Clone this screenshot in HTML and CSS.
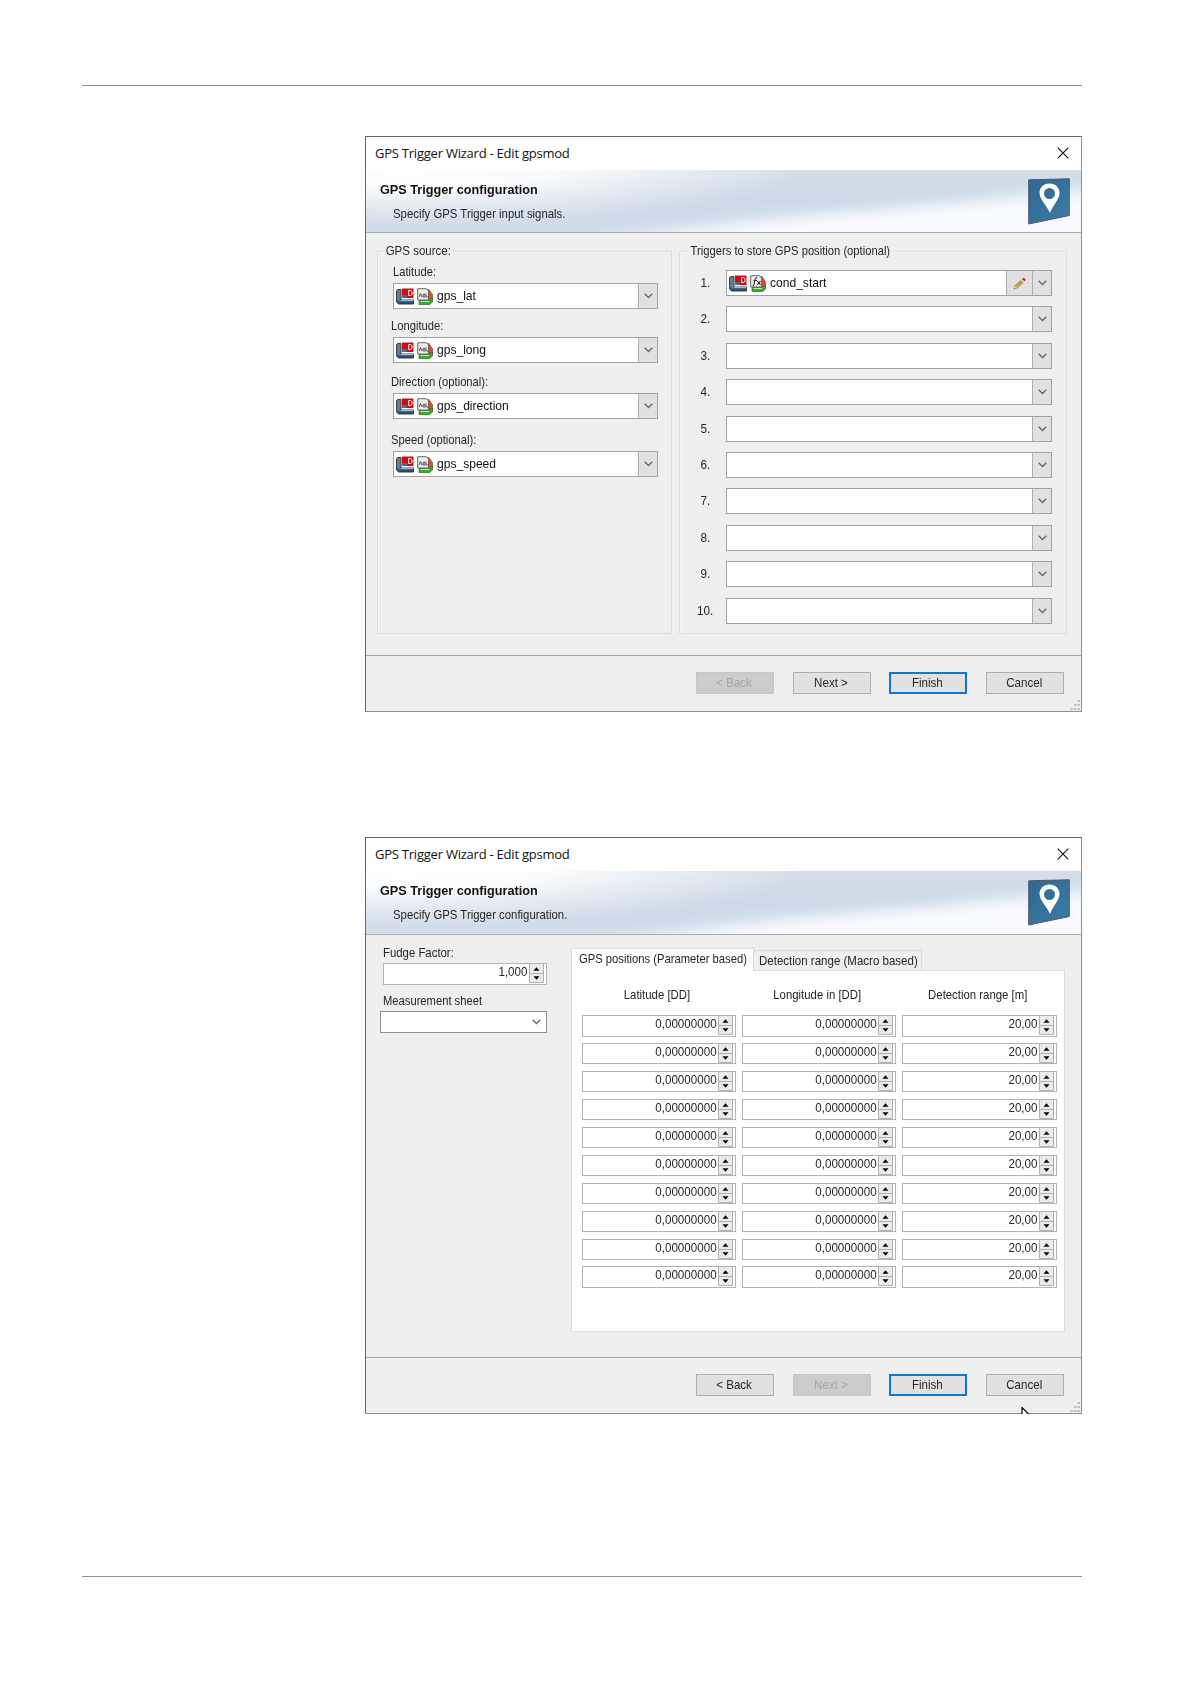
FILE: index.html
```html
<!DOCTYPE html>
<html lang="en">
<head>
<meta charset="utf-8">
<title>GPS Trigger Wizard</title>
<link rel="stylesheet" href="styles.css">
</head>
<body>
<svg class="defs" width="0" height="0">
  <defs>
    <linearGradient id="sky" x1="0" y1="0" x2="0" y2="1"><stop offset="0" stop-color="#d3dfe9"/><stop offset=".5" stop-color="#cbd9e6"/><stop offset="1" stop-color="#d0ddea"/></linearGradient>
    <radialGradient id="glow"><stop offset="0" stop-color="#fff"/><stop offset=".4" stop-color="#fff" stop-opacity=".85"/><stop offset="1" stop-color="#fff" stop-opacity="0"/></radialGradient>
    <linearGradient id="plate" x1="0" y1="0" x2="1" y2="1"><stop offset="0" stop-color="#2f6790"/><stop offset="1" stop-color="#3c7cab"/></linearGradient>
    <linearGradient id="steel" x1="0" y1="0" x2="0" y2="1"><stop offset="0" stop-color="#777"/><stop offset=".7" stop-color="#4f83b3"/><stop offset="1" stop-color="#26384a"/></linearGradient>
    <filter id="soft" x="-20%" y="-60%" width="140%" height="220%"><feGaussianBlur stdDeviation="16 7"/></filter>
  </defs>
  <symbol id="banner" viewBox="0 0 715 62" preserveAspectRatio="none">
    <rect width="715" height="62" fill="url(#sky)"/>
    <ellipse cx="40" cy="-6" rx="400" ry="62" fill="url(#glow)"/>
    <path d="M240 70 410 48 560 35 760 16V100H240z" fill="#f8faff" filter="url(#soft)"/>
  </symbol>
  <symbol id="pin" viewBox="0 0 42 47">
    <path d="M.7 1.8 41.3.8V37.5L.7 46z" fill="url(#plate)" stroke="#4c5b66" stroke-width="1"/>
    <path fill-rule="evenodd" d="M21.5 5.500c-6 0-10 4.200-10 9.500 0 6.500 6.500 11 10.500 20 3.500-9 9.500-13.500 9.500-20 0-5.300-4-9.500-10-9.500zm0 4.500a5.500 5.500 0 1 1 0 11 5.500 5.500 0 0 1 0-11z" fill="#fff"/>
  </symbol>
  <symbol id="device" viewBox="0 0 18 17">
    <path d="M1.500 1.500H5V12H17.500V16H2.500L.5 14V3z" fill="url(#steel)" stroke="#3a3f45"/>
    <path d="M5 12.500H17" stroke="#9cc0dd"/>
    <path d="M6 .5H17.500V10H6z" fill="#d20a12"/>
    <path d="M6 7H11V10H6z" fill="#4a6d8c"/>
    <path d="M12.700 2.500V7.500H14.500Q16.200 7 16.200 5T14.500 2.500z" fill="none" stroke="#fff"/>
  </symbol>
  <symbol id="sheet" viewBox="0 0 16 17">
    <path d="M9 1.500H12L15.700 7V12H11z" fill="#e0492a" stroke="#a53420" stroke-width=".6"/>
    <path d="M2 12H12L15.500 10V14L12.500 16.700H2z" fill="#3da835" stroke="#2c6e28" stroke-width=".7"/>
    <path d="M3.500 13.500H12" stroke="#bdf0a8"/>
    <path d="M.7.700H9.500L11.500 3V12H.7z" fill="#eee" stroke="#666"/>
  </symbol>
  <symbol id="signal" viewBox="0 0 16 17">
    <use href="#sheet"/>
    <path d="M2 9 3.500 5.500 4.800 9M6 6.500H8V9H6zM9 5.500V9H11" fill="none" stroke="#555"/>
  </symbol>
  <symbol id="function" viewBox="0 0 16 17">
    <use href="#sheet"/>
    <path d="M2.500 11Q4 11 4.500 7T7 2.500M3.500 5.500H7M7.500 6 10.500 10M10.500 6 7 10" fill="none" stroke="#333" stroke-width="1.100"/>
  </symbol>
  <symbol id="pencil" viewBox="0 0 14 14">
    <path d="M1 13 2 9.500 9 3 11.500 5.500 4.500 12z" fill="#b9a94a" stroke="#8a7b35" stroke-width=".6"/>
    <path d="M1 13 2 9.500 4.500 12z" fill="#e8dcb2"/><path d="M1 13 1.500 11.300 2.700 12.500z" fill="#444"/>
    <path d="M8.500 3.500 10 2 12.500 4.500 11 6z" fill="#ddd"/>
    <path d="M9.800 2.200 11 1Q13.500 1 13.500 3.300L12.300 4.600z" fill="#b3202c"/>
  </symbol>
  <symbol id="chevron" viewBox="0 0 9 6"><path d="M.7.800 4.500 4.500 8.300.800" fill="none" stroke="#666" stroke-width="1.300"/></symbol>
  <symbol id="cross" viewBox="0 0 12 12"><path d="M.7.700 11.300 11.300M11.300.700.700 11.300" stroke="#111" stroke-width="1.100"/></symbol>
  <symbol id="spinner" viewBox="0 0 16 19">
    <path d="M1 0H15V18H1z" fill="#ebebeb"/>
    <path d="M.5 0V18.500H14.500V0M0 9.500H14.500" fill="none" stroke="#b0b0b0"/>
    <path d="M4.500 6.700H10.500L7.500 3.200zM4.500 12.300H10.500L7.500 15.800z" fill="#000"/>
  </symbol>
  <symbol id="grip" viewBox="0 0 10 10"><path d="M7.500 0H10V2H7.500zM4 4H6.500V6H4zM7.500 4H10V6H7.500zM.5 8H3V10H.5zM4 8H6.500V10H4zM7.500 8H10V10H7.500z" fill="#bfbfbf"/></symbol>
</svg>

<main class="page">
  <section class="window window-signals">
    <header class="titlebar"><span class="caption">GPS Trigger Wizard - Edit gpsmod</span><svg class="close"><use href="#cross"/></svg></header>
    <div class="banner">
      <svg class="banner-art"><use href="#banner"/></svg>
      <div class="banner-text"><b class="txt">GPS Trigger configuration</b><span class="txt sub">Specify GPS Trigger input signals.</span></div>
      <svg class="pin"><use href="#pin"/></svg>
    </div>
    <div class="content groups">
      <div class="group source">
        <div class="legend"><span class="txt">GPS source:</span></div>
        <div class="field f1"><span class="txt label">Latitude:</span><div class="combo"><svg class="ic"><use href="#device"/></svg><svg class="ic2"><use href="#signal"/></svg><span class="txt value">gps_lat</span><i class="drop"><svg class="chev"><use href="#chevron"/></svg></i></div></div>
        <div class="field f2"><span class="txt label">Longitude:</span><div class="combo"><svg class="ic"><use href="#device"/></svg><svg class="ic2"><use href="#signal"/></svg><span class="txt value">gps_long</span><i class="drop"><svg class="chev"><use href="#chevron"/></svg></i></div></div>
        <div class="field f3"><span class="txt label">Direction (optional):</span><div class="combo"><svg class="ic"><use href="#device"/></svg><svg class="ic2"><use href="#signal"/></svg><span class="txt value">gps_direction</span><i class="drop"><svg class="chev"><use href="#chevron"/></svg></i></div></div>
        <div class="field f4"><span class="txt label">Speed (optional):</span><div class="combo"><svg class="ic"><use href="#device"/></svg><svg class="ic2"><use href="#signal"/></svg><span class="txt value">gps_speed</span><i class="drop"><svg class="chev"><use href="#chevron"/></svg></i></div></div>
      </div>
      <div class="group triggers">
        <div class="legend"><span class="txt">Triggers to store GPS position (optional)</span></div>
        <div class="trigger-list">
          <span class="txt num">1.</span><div class="combo"><svg class="ic"><use href="#device"/></svg><svg class="ic2"><use href="#function"/></svg><span class="txt value">cond_start</span><i class="edit"><svg class="pencil"><use href="#pencil"/></svg></i><i class="drop"><svg class="chev"><use href="#chevron"/></svg></i></div>
          <span class="txt num">2.</span><div class="combo"><i class="drop"><svg class="chev"><use href="#chevron"/></svg></i></div>
          <span class="txt num">3.</span><div class="combo"><i class="drop"><svg class="chev"><use href="#chevron"/></svg></i></div>
          <span class="txt num">4.</span><div class="combo"><i class="drop"><svg class="chev"><use href="#chevron"/></svg></i></div>
          <span class="txt num">5.</span><div class="combo"><i class="drop"><svg class="chev"><use href="#chevron"/></svg></i></div>
          <span class="txt num">6.</span><div class="combo"><i class="drop"><svg class="chev"><use href="#chevron"/></svg></i></div>
          <span class="txt num">7.</span><div class="combo"><i class="drop"><svg class="chev"><use href="#chevron"/></svg></i></div>
          <span class="txt num">8.</span><div class="combo"><i class="drop"><svg class="chev"><use href="#chevron"/></svg></i></div>
          <span class="txt num">9.</span><div class="combo"><i class="drop"><svg class="chev"><use href="#chevron"/></svg></i></div>
          <span class="txt num">10.</span><div class="combo"><i class="drop"><svg class="chev"><use href="#chevron"/></svg></i></div>
        </div>
      </div>
    </div>
    <footer class="actions">
      <div class="btn disabled"><span class="txt">&lt; Back</span></div><div class="btn"><span class="txt">Next &gt;</span></div><div class="btn primary"><span class="txt">Finish</span></div><div class="btn"><span class="txt">Cancel</span></div>
      <svg class="grip"><use href="#grip"/></svg>
    </footer>
  </section>

  <section class="window window-positions">
    <header class="titlebar"><span class="caption">GPS Trigger Wizard - Edit gpsmod</span><svg class="close"><use href="#cross"/></svg></header>
    <div class="banner">
      <svg class="banner-art"><use href="#banner"/></svg>
      <div class="banner-text"><b class="txt">GPS Trigger configuration</b><span class="txt sub">Specify GPS Trigger configuration.</span></div>
      <svg class="pin"><use href="#pin"/></svg>
    </div>
    <div class="content positions">
      <div class="side">
        <span class="txt label">Fudge Factor:</span>
        <div class="spin factor"><span class="txt">1,000</span><svg><use href="#spinner"/></svg></div>
        <span class="txt label second">Measurement sheet</span>
        <div class="select"><svg class="chev"><use href="#chevron"/></svg></div>
      </div>
      <div class="tabs">
        <div class="tab-row"><div class="tab active"><span class="txt">GPS positions (Parameter based)</span></div><div class="tab"><span class="txt">Detection range (Macro based)</span></div></div>
        <div class="panel">
          <div class="heads"><span class="txt">Latitude [DD]</span><span class="txt">Longitude in [DD]</span><span class="txt">Detection range [m]</span></div>
          <div class="cells">
            <div class="spin"><span class="txt">0,00000000</span><svg><use href="#spinner"/></svg></div><div class="spin"><span class="txt">0,00000000</span><svg><use href="#spinner"/></svg></div><div class="spin"><span class="txt">20,00</span><svg><use href="#spinner"/></svg></div>
            <div class="spin"><span class="txt">0,00000000</span><svg><use href="#spinner"/></svg></div><div class="spin"><span class="txt">0,00000000</span><svg><use href="#spinner"/></svg></div><div class="spin"><span class="txt">20,00</span><svg><use href="#spinner"/></svg></div>
            <div class="spin"><span class="txt">0,00000000</span><svg><use href="#spinner"/></svg></div><div class="spin"><span class="txt">0,00000000</span><svg><use href="#spinner"/></svg></div><div class="spin"><span class="txt">20,00</span><svg><use href="#spinner"/></svg></div>
            <div class="spin"><span class="txt">0,00000000</span><svg><use href="#spinner"/></svg></div><div class="spin"><span class="txt">0,00000000</span><svg><use href="#spinner"/></svg></div><div class="spin"><span class="txt">20,00</span><svg><use href="#spinner"/></svg></div>
            <div class="spin"><span class="txt">0,00000000</span><svg><use href="#spinner"/></svg></div><div class="spin"><span class="txt">0,00000000</span><svg><use href="#spinner"/></svg></div><div class="spin"><span class="txt">20,00</span><svg><use href="#spinner"/></svg></div>
            <div class="spin"><span class="txt">0,00000000</span><svg><use href="#spinner"/></svg></div><div class="spin"><span class="txt">0,00000000</span><svg><use href="#spinner"/></svg></div><div class="spin"><span class="txt">20,00</span><svg><use href="#spinner"/></svg></div>
            <div class="spin"><span class="txt">0,00000000</span><svg><use href="#spinner"/></svg></div><div class="spin"><span class="txt">0,00000000</span><svg><use href="#spinner"/></svg></div><div class="spin"><span class="txt">20,00</span><svg><use href="#spinner"/></svg></div>
            <div class="spin"><span class="txt">0,00000000</span><svg><use href="#spinner"/></svg></div><div class="spin"><span class="txt">0,00000000</span><svg><use href="#spinner"/></svg></div><div class="spin"><span class="txt">20,00</span><svg><use href="#spinner"/></svg></div>
            <div class="spin"><span class="txt">0,00000000</span><svg><use href="#spinner"/></svg></div><div class="spin"><span class="txt">0,00000000</span><svg><use href="#spinner"/></svg></div><div class="spin"><span class="txt">20,00</span><svg><use href="#spinner"/></svg></div>
            <div class="spin"><span class="txt">0,00000000</span><svg><use href="#spinner"/></svg></div><div class="spin"><span class="txt">0,00000000</span><svg><use href="#spinner"/></svg></div><div class="spin"><span class="txt">20,00</span><svg><use href="#spinner"/></svg></div>
          </div>
        </div>
      </div>
    </div>
    <footer class="actions">
      <div class="btn"><span class="txt">&lt; Back</span></div><div class="btn disabled"><span class="txt">Next &gt;</span></div><div class="btn primary"><span class="txt">Finish</span></div><div class="btn"><span class="txt">Cancel</span></div>
      <svg class="grip"><use href="#grip"/></svg>
      <svg class="cursor" viewBox="0 0 8 7"><path d="M1 8V.5L8 7.500" fill="#fff" stroke="#000" stroke-width="1.200"/></svg>
    </footer>
  </section>
</main>
</body>
</html>
```
FILE: styles.css
```css
* { box-sizing: border-box; }
body { margin: 0; background: #fff; }
svg { display: block; flex: none; }
.defs { position: absolute; }

.page {
  width: 1000px;
  height: 1492px;
  margin: 85px 0 0 82px;
  padding-top: 50px;
  border-top: 1px solid #8c8c8c;
  border-bottom: 1px solid #8c8c8c;
  display: flex;
  flex-direction: column;
  align-items: flex-end;
  gap: 125px;
  font: 13px/16px "Liberation Sans", Arial, sans-serif;
  color: #262626;
}

.txt { display: inline-block; white-space: nowrap; transform: scaleX(.862); transform-origin: 0 50%; }

.window {
  width: 717px;
  height: 576px;
  border: 1px solid #8f8f8f;
  border-left-color: #666;
  border-top-color: #666;
  background: #efefef;
  display: flex;
  flex-direction: column;
}
.window-positions { height: 577px; }

.titlebar {
  height: 33px;
  padding: 0 12px 2px 9px;
  background: #fff;
  display: flex;
  align-items: center;
  justify-content: space-between;
}
.caption { font: 13px/20px "Open Sans", "Noto Sans", sans-serif; color: #111; letter-spacing: -.23px; white-space: nowrap; }
.close { width: 12px; height: 12px; }

.banner {
  position: relative;
  height: 63px;
  border-bottom: 1px solid #ababab;
  display: flex;
  justify-content: space-between;
  padding: 8px 11px 0 14px;
}
.window-positions .banner { height: 64px; }
.banner-art { position: absolute; left: 0; top: 0; width: 100%; height: 100%; }
.banner-text { position: relative; display: flex; flex-direction: column; gap: 8px; padding-top: 4px; }
.banner-text b { transform: scaleX(.975); color: #111; }
.banner-text .sub { margin-left: 13px; transform: scaleX(.874); }
.pin { position: relative; width: 42px; height: 47px; }

.content { flex: 1; }
.groups { display: flex; gap: 7px; padding: 18px 14px 21px 11px; }
.group { border: 1px solid #dfdfdf; box-shadow: inset 1px 1px #f6f6f6; }
.source { width: 295px; }
.triggers { flex: 1; }
.legend { height: 16px; margin: -9px 0 0 5px; }
.legend .txt { background: #efefef; padding: 0 3px; }
.source .legend .txt { transform: scaleX(.885); }
.triggers .legend { margin-left: 8px; }

.source .field { margin-left: 15px; display: flex; flex-direction: column; width: 265px; }
.source .label { margin-left: -2px; }
.f1 { margin-top: 5px; }
.source .f1 .label { margin-left: 0; }
.f1, .f2, .f3, .f4 { gap: 3px; }
.f2 { margin-top: 9px; }
.f3 { margin-top: 11px; }
.f4 { margin-top: 13px; }

.combo {
  height: 26px;
  border: 1px solid #a2a2a2;
  background: #fff;
  display: flex;
  align-items: center;
  padding-left: 2px;
}
.ic { width: 18px; height: 17px; margin-right: 3px; }
.ic2 { width: 16px; height: 17px; margin-right: 4px; }
.value { transform: scaleX(.928); color: #111; }
.drop, .edit {
  align-self: stretch;
  border-left: 1px solid #b0b0b0;
  background: #e1e1e1;
  display: flex;
  align-items: center;
  justify-content: center;
  width: 19px;
}
.drop { margin-left: auto; }
.edit { margin-left: auto; width: 26px; }
.edit + .drop { margin-left: 0; }
.chev { width: 9px; height: 6px; }
.pencil { width: 13px; height: 13px; }

.trigger-list {
  display: grid;
  grid-template-columns: 29px 326px;
  grid-auto-rows: 26px;
  row-gap: 10.4px;
  align-items: center;
  margin: 11px 0 0 17px;
}
.num { justify-self: center; margin-right: 13px; transform: scaleX(.9); transform-origin: 50% 50%; }

.actions {
  position: relative;
  height: 56px;
  border-top: 1px solid #a5a5a5;
  padding: 16px 17px 0 0;
  display: flex;
  justify-content: flex-end;
  gap: 18.7px;
}
.btn {
  width: 78px;
  height: 22px;
  border: 1px solid #adadad;
  background: #e1e1e1;
  display: flex;
  align-items: center;
  justify-content: center;
  padding-right: 2px;
}
.btn .txt { transform-origin: 50% 50%; transform: scaleX(.89); }
.btn.disabled { background: #cccccc; border-color: #c6c6c6; color: #a6a6a6; }
.btn.primary { border: 2px solid #0f78d4; }
.grip { position: absolute; right: 1px; bottom: 1px; width: 10px; height: 10px; }
.cursor { position: absolute; left: 655px; bottom: -1px; width: 8px; height: 7px; }

.positions { display: flex; padding: 0 16px 25px 14px; justify-content: space-between; }
.side { width: 167px; padding-top: 10px; display: flex; flex-direction: column; align-items: flex-end; }
.side .label { align-self: flex-start; margin: 0 0 2px 3px; transform: scaleX(.875); }
.side .second { margin: 8px 0 2px 3px; transform: scaleX(.862); }
.factor { width: 164px; }
.select { width: 167px; height: 22px; border: 1px solid #8e8e8e; background: #fff; display: flex; align-items: center; justify-content: flex-end; padding-right: 5px; }

.spin {
  height: 21.500px;
  border: 1px solid #b4b4b4;
  background: #fff;
  display: flex;
  align-items: flex-start;
  justify-content: flex-end;
  gap: 1px;
  padding-right: 1px;
}
.spin .txt { transform-origin: 100% 50%; transform: scaleX(.895); }
.spin svg { width: 16px; height: 19px; }

.tabs { width: 494px; padding-top: 13px; display: flex; flex-direction: column; }
.tab-row { display: flex; align-items: flex-end; height: 22px; }
.tab { height: 20px; width: 168px; padding: 2px 0 0 5px; border: 1px solid #dcdcdc; border-left: 0; border-bottom: 0; }
.tab .txt { transform: scaleX(.886); }
.tab.active { position: relative; height: 23px; margin-bottom: -1px; width: 183px; padding: 2px 0 0 7px; border-left: 1px solid #dcdcdc; background: #fff; }
.tab.active .txt { transform: scaleX(.864); }
.panel { flex: 1; border: 1px solid #dcdcdc; background: #fff; padding: 16px 7px 0 10px; }
.heads, .cells { display: grid; grid-template-columns: 154px 154px 155px; column-gap: 6px; }
.heads { margin: 0 3px 0 -2px; }
.heads .txt { justify-self: center; transform-origin: 50% 50%; transform: scaleX(.875); }
.cells { margin-top: 12px; row-gap: 6.450px; }
```
